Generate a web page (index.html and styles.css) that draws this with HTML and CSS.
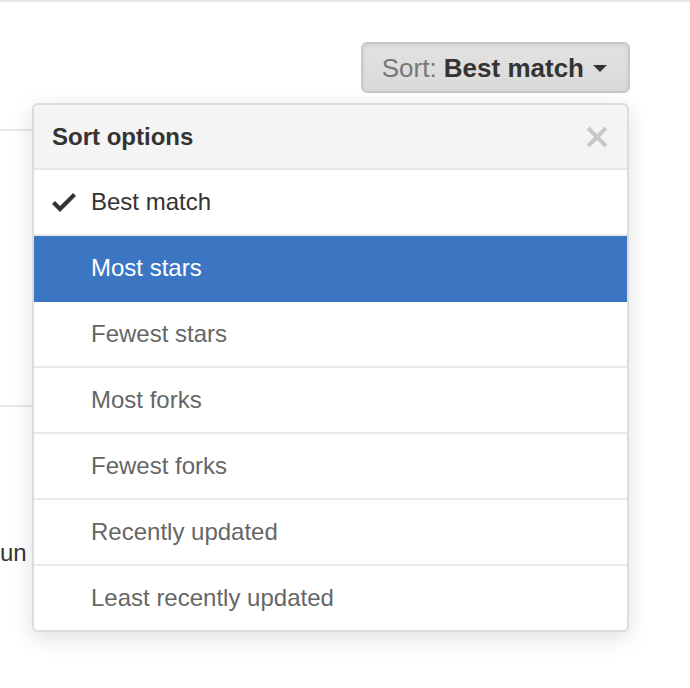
FILE: index.html
```html
<!DOCTYPE html>
<html>
<head>
<meta charset="utf-8">
<link rel="stylesheet" href="styles.css">
</head>
<body>
<div class="page">
  <div class="toolbar">
    <div class="sort">
      <button class="sort-btn"><span class="sort-label">Sort: </span><span class="sort-value">Best match</span><span class="caret"></span></button>
      <div class="menu">
        <div class="menu-header">
          <span class="menu-title">Sort options</span>
          <svg class="close" viewBox="0 0 12 16" width="24" height="32"><path d="M7.48 8l3.75 3.75-1.48 1.48L6 9.480l-3.75 3.75-1.48-1.48L4.52 8 .77 4.25l1.48-1.48L6 6.52l3.75-3.750 1.48 1.48L7.48 8z"/></svg>
        </div>
        <div class="menu-item selected">
          <svg class="check" viewBox="0 0 12 16" width="24" height="32"><path d="M12 5l-8 8-4-4 1.5-1.5L4 10l6.5-6.5L12 5z"/></svg>
          <span>Best match</span>
        </div>
        <div class="menu-item active"><span>Most stars</span></div>
        <div class="menu-item"><span>Fewest stars</span></div>
        <div class="menu-item"><span>Most forks</span></div>
        <div class="menu-item"><span>Fewest forks</span></div>
        <div class="menu-item"><span>Recently updated</span></div>
        <div class="menu-item"><span>Least recently updated</span></div>
      </div>
    </div>
  </div>
  <div class="results">
    <div class="result result-first"></div>
    <div class="result result-second"><span class="result-text">un</span></div>
  </div>
</div>
</body>
</html>
```

FILE: styles.css
```css
html, body {
  margin: 0;
  padding: 0;
  background: #fff;
}

body {
  font-family: "Liberation Sans", Arial, sans-serif;
  color: #333;
}

.page {
  border-top: 2px solid #e8e8e8;
  width: 690px;
  height: 686px;
  overflow: hidden;
}

.toolbar {
  display: flex;
  justify-content: flex-end;
  padding-top: 40px;
  padding-right: 60px;
}

.sort {
  position: relative;
}

.sort-btn {
  display: block;
  height: 51px;
  box-sizing: border-box;
  padding: 0 21px 0 19px;
  border: 2px solid #c8c8c8;
  border-radius: 6px;
  background: linear-gradient(#e2e2e2, #dadada);
  box-shadow: inset 0 2px 4px rgba(0, 0, 0, 0.08);
  font-family: "Liberation Sans", Arial, sans-serif;
  font-size: 26px;
  line-height: 46px;
  white-space: pre;
}

.sort-label {
  color: #777;
}

.sort-value {
  color: #333;
  font-weight: bold;
}

.caret {
  display: inline-block;
  vertical-align: middle;
  margin-left: 9px;
  margin-top: -2px;
  width: 0;
  height: 0;
  border-top: 7px solid #333;
  border-left: 7px solid transparent;
  border-right: 7px solid transparent;
}

.menu {
  position: absolute;
  top: 61px;
  right: 1px;
  width: 597px;
  box-sizing: border-box;
  background: #fff;
  border: 2px solid #dcdcdc;
  border-radius: 6px;
  box-shadow: 0 6px 22px rgba(0, 0, 0, 0.13);
  overflow: hidden;
  z-index: 10;
}

.menu-header {
  display: flex;
  align-items: center;
  justify-content: space-between;
  height: 63px;
  padding: 0 18px 0 18px;
  background: #f4f4f4;
  border-bottom: 2px solid #e5e5e5;
}

.menu-title {
  font-size: 24px;
  font-weight: bold;
  color: #333;
}

.close {
  fill: #c8c8c8;
  display: block;
}

.menu-item {
  display: flex;
  align-items: center;
  height: 64px;
  padding-left: 57px;
  font-size: 24px;
  color: #666;
  border-bottom: 2px solid #eaeaea;
}

.menu-item:last-child {
  border-bottom: none;
}

.menu-item.selected {
  padding-left: 18px;
  color: #333;
}

.check {
  display: block;
  fill: #333;
  margin-right: 15px;
}

.menu-item.active {
  background: #3c76c3;
  color: #fff;
  border-bottom-color: #3c76c3;
}

.results {
  width: 629px;
  margin-top: 36px;
}

.result {
  border-top: 2px solid #e8e8e8;
}

.result-first {
  height: 274px;
}

.result-second {
  padding-top: 131px;
}

.result-text {
  font-size: 24px;
  line-height: 30px;
  color: #333;
}
```
